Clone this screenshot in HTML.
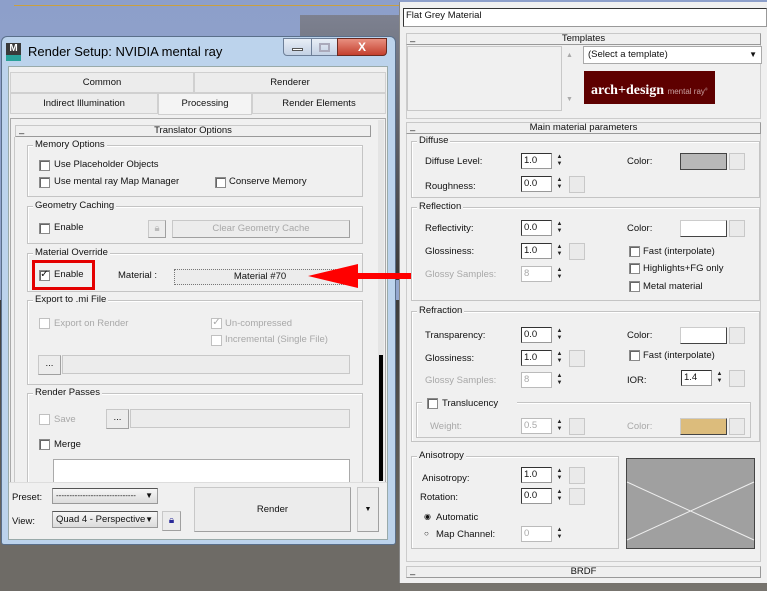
<!DOCTYPE html><html><head><style>
*{box-sizing:border-box;margin:0;padding:0}
body{width:767px;height:591px;overflow:hidden;position:relative;font-family:"Liberation Sans",sans-serif;font-size:9.5px;color:#111;background:#6c6a66}
.a{position:absolute}
.g{position:absolute;border:1px solid #c4c4c4;box-shadow:inset 1px 1px 0 #fff}
.gl{position:absolute;top:-7px;left:5px;background:#f0f0f0;padding:0 2px;font-size:9.5px}
.cb{position:absolute;width:11px;height:11px;background:#fff;border:1px solid #8a8a8a;box-shadow:inset 1px 1px 0 #666}
.btn{position:absolute;background:#ececec;border:1px solid #c8c8c8;border-right-color:#a0a0a0;border-bottom-color:#a0a0a0;text-align:center}
.in{position:absolute;background:#fff;border:1px solid #999;border-top-color:#333;border-left-color:#333;padding-left:2px;font-size:9.5px;line-height:13px}
.sp{position:absolute;width:9px;height:15px;font-size:6px;line-height:7px;text-align:center;color:#222}
.mb{position:absolute;width:16px;height:17px;background:#eaeaea;border:1px solid #c8c8c8}
.hd{position:absolute;height:12px;background:#efefef;border:1px solid #c8c8c8;border-right-color:#999;border-bottom-color:#999;text-align:center;line-height:10px}
.dis{color:#a8a8a8}
.tab{position:absolute;background:#ececec;border:1px solid #d0d0d0;text-align:center;line-height:19px}
</style></head><body>
<div class="a" style="left:0;top:0;width:767px;height:300px;background:linear-gradient(#8d9fca,#93a6cd)"></div>
<div class="a" style="left:300px;top:15px;width:100px;height:265px;background:linear-gradient(#7d8190,#3a3938)"></div>
<div class="a" style="left:0;top:300px;width:767px;height:291px;background:linear-gradient(#3e3d3b,#77746e)"></div>
<div class="a" style="left:0;top:540px;width:400px;height:51px;background:#6e6b66"></div>
<div class="a" style="left:14px;top:5px;width:390px;height:1px;background:#c9a040"></div>

<div class="a" style="left:1px;top:36px;width:395px;height:509px;background:#bcd3ec;border:1px solid #5a6f8a;border-radius:6px 6px 3px 3px"></div>
<div class="a" style="left:6px;top:43px;width:15px;height:18px;background:#3a3a3a;color:#fff;font-size:10px;font-weight:bold;line-height:12px;text-align:center">M<div style="background:#2aa19a;height:6px"></div></div>
<div class="a" style="left:28px;top:44px;font-size:13px;color:#000">Render Setup: NVIDIA mental ray</div>
<div class="a" style="left:283px;top:38px;width:29px;height:18px;border:1px solid #6d7f98;border-radius:0 0 0 4px;background:linear-gradient(#e8eef6,#c3d1e4)"><div style="margin:9px 8px 0;height:3px;background:#fff;border:1px solid #555"></div></div>
<div class="a" style="left:311px;top:38px;width:27px;height:18px;border:1px solid #6d7f98;background:linear-gradient(#e8eef6,#c3d1e4)"><div style="margin:4px 7px;height:9px;border:2px solid #aab"></div></div>
<div class="a" style="left:337px;top:38px;width:50px;height:18px;border:1px solid #6b2a20;border-radius:0 0 4px 0;background:linear-gradient(#e89080,#c4402e);color:#fff;font-weight:bold;font-size:12px;text-align:center;line-height:16px">X</div>
<div class="a" style="left:8px;top:66px;width:380px;height:474px;background:#f0f0f0;border:1px solid #9aa"></div>
<div class="tab" style="left:10px;top:72px;width:184px;height:21px">Common</div>
<div class="tab" style="left:194px;top:72px;width:192px;height:21px">Renderer</div>
<div class="tab" style="left:10px;top:93px;width:148px;height:21px">Indirect Illumination</div>
<div class="tab" style="left:158px;top:93px;width:94px;height:22px;background:#f4f4f4">Processing</div>
<div class="tab" style="left:252px;top:93px;width:134px;height:21px">Render Elements</div>
<div class="a" style="left:10px;top:118px;width:376px;height:368px;border:1px solid #aaa;background:#f0f0f0"></div>
<div class="a" style="left:378px;top:120px;width:6px;height:360px;background:#e4e4e4"></div>
<div class="a" style="left:379px;top:355px;width:4px;height:126px;background:#000"></div>
<div class="hd" style="left:15px;top:125px;width:356px">Translator Options</div>
<div class="a" style="left:19px;top:128px">–</div>
<div class="a" style="left:14px;top:137px;width:361px;height:348px;border-left:1px solid #c8c8c8"></div>

<div class="g" style="left:27px;top:145px;width:336px;height:52px"><span class="gl">Memory Options</span></div>
<div class="cb" style="left:39px;top:160px"></div><div class="a" style="left:54px;top:159px">Use Placeholder Objects</div>
<div class="cb" style="left:39px;top:177px"></div><div class="a" style="left:54px;top:176px">Use mental ray Map Manager</div>
<div class="cb" style="left:215px;top:177px"></div><div class="a" style="left:229px;top:176px">Conserve Memory</div>

<div class="g" style="left:27px;top:206px;width:336px;height:38px"><span class="gl">Geometry Caching</span></div>
<div class="cb" style="left:39px;top:223px"></div><div class="a" style="left:54px;top:222px">Enable</div>
<div class="btn" style="left:148px;top:220px;width:18px;height:18px;color:#bbb;line-height:16px">🔒︎</div>
<div class="btn dis" style="left:172px;top:220px;width:178px;height:18px;line-height:16px">Clear Geometry Cache</div>

<div class="g" style="left:27px;top:253px;width:336px;height:39px"><span class="gl">Material Override</span></div>
<div class="a" style="left:32px;top:260px;width:63px;height:30px;border:3px solid #e40000"></div>
<div class="cb" style="left:39px;top:270px;font-size:10px;line-height:8px;text-align:center">✓</div><div class="a" style="left:54px;top:269px">Enable</div>
<div class="a" style="left:118px;top:270px">Material :</div>
<div class="btn" style="left:174px;top:269px;width:172px;height:16px;line-height:14px;border:1px dotted #777">Material #70</div>

<div class="g" style="left:27px;top:300px;width:336px;height:85px"><span class="gl">Export to .mi File</span></div>
<div class="cb" style="left:39px;top:318px;border-color:#c0c0c0;box-shadow:none"></div><div class="a dis" style="left:54px;top:318px">Export on Render</div>
<div class="cb" style="left:211px;top:318px;border-color:#c0c0c0;box-shadow:none;color:#aaa;font-size:10px;line-height:8px;text-align:center">✓</div><div class="a dis" style="left:225px;top:318px">Un-compressed</div>
<div class="cb" style="left:211px;top:335px;border-color:#c0c0c0;box-shadow:none"></div><div class="a dis" style="left:225px;top:334px">Incremental (Single File)</div>
<div class="btn" style="left:38px;top:355px;width:23px;height:20px;line-height:15px">...</div>
<div class="a" style="left:62px;top:355px;width:288px;height:19px;border:1px solid #c8c8c8;background:#ececec"></div>

<div class="g" style="left:27px;top:393px;width:336px;height:94px;border-bottom:none"><span class="gl">Render Passes</span></div>
<div class="cb" style="left:39px;top:414px;border-color:#c0c0c0;box-shadow:none"></div><div class="a dis" style="left:54px;top:414px">Save</div>
<div class="btn" style="left:106px;top:409px;width:23px;height:20px;line-height:15px">...</div>
<div class="a" style="left:130px;top:409px;width:220px;height:19px;border:1px solid #c8c8c8;background:#ececec"></div>
<div class="cb" style="left:39px;top:439px"></div><div class="a" style="left:54px;top:439px">Merge</div>
<div class="a" style="left:53px;top:459px;width:297px;height:26px;background:#fff;border:1px solid #aaa"></div>
<div class="a" style="left:9px;top:482px;width:378px;height:57px;background:#f0f0f0;border-top:1px solid #ddd"></div>
<div class="a" style="left:12px;top:492px">Preset:</div>
<div class="a" style="left:52px;top:488px;width:106px;height:16px;border:1px solid #999;border-top-color:#555;background:linear-gradient(#f6f6f6,#dcdcdc);font-size:8px;line-height:13px;padding-left:3px">------------------------------ <span style="position:absolute;right:4px">▼</span></div>
<div class="a" style="left:12px;top:516px">View:</div>
<div class="a" style="left:52px;top:511px;width:106px;height:17px;border:1px solid #999;border-top-color:#555;background:linear-gradient(#f6f6f6,#dcdcdc);line-height:15px;padding-left:3px">Quad 4 - Perspective<span style="position:absolute;right:4px;font-size:8px">▼</span></div>
<div class="btn" style="left:162px;top:511px;width:19px;height:20px;color:#2a2a9a;line-height:18px;font-size:10px">🔒︎</div>
<div class="btn" style="left:194px;top:487px;width:157px;height:45px;line-height:43px">Render</div>
<div class="btn" style="left:357px;top:487px;width:22px;height:45px;line-height:43px;font-size:7px">▼</div>

<div class="a" style="left:399px;top:2px;width:368px;height:581px;background:#f0f0f0;border-left:1px solid #888"></div>
<div class="in" style="left:403px;top:8px;width:364px;height:19px;line-height:13px;padding-left:2px">Flat Grey Material</div>
<div class="hd" style="left:406px;top:33px;width:355px">Templates</div><div class="a" style="left:410px;top:36px">–</div>
<div class="a" style="left:406px;top:45px;width:355px;height:74px;border:1px solid #ccc;border-top:none"></div>
<div class="a" style="left:407px;top:46px;width:155px;height:65px;border:1px solid #c8c8c8"></div>
<div class="a" style="left:566px;top:52px;font-size:7px;color:#aaa">▲</div>
<div class="a" style="left:566px;top:96px;font-size:7px;color:#aaa">▼</div>
<div class="a" style="left:583px;top:46px;width:179px;height:18px;background:#fff;border:1px solid #aaa;line-height:15px;padding-left:4px;font-size:9.5px">(Select a template)<span style="position:absolute;right:4px;font-size:8px">▼</span></div>
<div class="a" style="left:584px;top:71px;width:131px;height:33px;background:#5e0000;color:#fff;padding:12px 0 0 7px;font-family:'Liberation Serif',serif;font-size:14px;font-weight:bold;white-space:nowrap">arch+design <span style="font-family:'Liberation Sans';font-size:8px;font-weight:normal;color:#c9a0a0">mental ray<sup style="font-size:4px">®</sup></span></div>

<div class="hd" style="left:406px;top:122px;width:355px">Main material parameters</div><div class="a" style="left:410px;top:125px">–</div>
<div class="a" style="left:406px;top:134px;width:355px;height:428px;border:1px solid #ccc;border-top:none"></div>

<div class="g" style="left:411px;top:141px;width:349px;height:57px"><span class="gl">Diffuse</span></div>
<div class="a" style="left:425px;top:156px">Diffuse Level:</div>
<div class="in" style="left:521px;top:153px;width:31px;height:16px">1.0</div><div class="sp" style="left:555px;top:154px">▲<br>▼</div>
<div class="a" style="left:627px;top:156px">Color:</div>
<div class="a" style="left:680px;top:153px;width:47px;height:17px;background:#b8b8b8;border:1px solid #444"></div><div class="mb" style="left:729px;top:153px"></div>
<div class="a" style="left:425px;top:181px">Roughness:</div>
<div class="in" style="left:521px;top:176px;width:31px;height:16px">0.0</div><div class="sp" style="left:555px;top:177px">▲<br>▼</div><div class="mb" style="left:569px;top:176px"></div>

<div class="g" style="left:411px;top:207px;width:349px;height:94px"><span class="gl">Reflection</span></div>
<div class="a" style="left:425px;top:223px">Reflectivity:</div>
<div class="in" style="left:521px;top:220px;width:31px;height:16px">0.0</div><div class="sp" style="left:555px;top:221px">▲<br>▼</div>
<div class="a" style="left:627px;top:223px">Color:</div>
<div class="a" style="left:680px;top:220px;width:47px;height:17px;background:#fff;border:1px solid #ccc;border-right-color:#444;border-bottom-color:#444"></div><div class="mb" style="left:729px;top:220px"></div>
<div class="a" style="left:425px;top:246px">Glossiness:</div>
<div class="in" style="left:521px;top:243px;width:31px;height:16px">1.0</div><div class="sp" style="left:555px;top:244px">▲<br>▼</div><div class="mb" style="left:569px;top:243px"></div>
<div class="cb" style="left:629px;top:246px"></div><div class="a" style="left:643px;top:246px">Fast (interpolate)</div>
<div class="a dis" style="left:425px;top:269px">Glossy Samples:</div>
<div class="in dis" style="left:521px;top:266px;width:31px;height:16px;border-color:#bbb">8</div><div class="sp" style="left:555px;top:267px">▲<br>▼</div>
<div class="cb" style="left:629px;top:263px"></div><div class="a" style="left:643px;top:263px">Highlights+FG only</div>
<div class="cb" style="left:629px;top:281px"></div><div class="a" style="left:643px;top:281px">Metal material</div>

<div class="g" style="left:411px;top:311px;width:349px;height:131px"><span class="gl">Refraction</span></div>
<div class="a" style="left:425px;top:330px">Transparency:</div>
<div class="in" style="left:521px;top:327px;width:31px;height:16px">0.0</div><div class="sp" style="left:555px;top:328px">▲<br>▼</div>
<div class="a" style="left:627px;top:330px">Color:</div>
<div class="a" style="left:680px;top:327px;width:47px;height:17px;background:#fff;border:1px solid #ccc;border-right-color:#444;border-bottom-color:#444"></div><div class="mb" style="left:729px;top:327px"></div>
<div class="a" style="left:425px;top:353px">Glossiness:</div>
<div class="in" style="left:521px;top:350px;width:31px;height:16px">1.0</div><div class="sp" style="left:555px;top:351px">▲<br>▼</div><div class="mb" style="left:569px;top:350px"></div>
<div class="cb" style="left:629px;top:350px"></div><div class="a" style="left:643px;top:350px">Fast (interpolate)</div>
<div class="a dis" style="left:425px;top:375px">Glossy Samples:</div>
<div class="in dis" style="left:521px;top:372px;width:31px;height:16px;border-color:#bbb">8</div><div class="sp" style="left:555px;top:373px">▲<br>▼</div>
<div class="a" style="left:627px;top:375px">IOR:</div>
<div class="in" style="left:681px;top:370px;width:31px;height:16px">1.4</div><div class="sp" style="left:715px;top:371px">▲<br>▼</div><div class="mb" style="left:729px;top:370px"></div>
<div class="g" style="left:416px;top:402px;width:335px;height:36px"></div>
<div class="a" style="left:422px;top:396px;width:95px;height:12px;background:#f0f0f0"></div>
<div class="cb" style="left:427px;top:398px"></div><div class="a" style="left:442px;top:398px">Translucency</div>
<div class="a dis" style="left:430px;top:421px">Weight:</div>
<div class="in dis" style="left:521px;top:418px;width:31px;height:16px;border-color:#bbb">0.5</div><div class="sp" style="left:555px;top:419px">▲<br>▼</div><div class="mb" style="left:569px;top:418px"></div>
<div class="a dis" style="left:627px;top:421px">Color:</div>
<div class="a" style="left:680px;top:418px;width:47px;height:17px;background:#dcbc7c;border:1px solid #ccc;border-right-color:#444;border-bottom-color:#444"></div><div class="mb" style="left:729px;top:418px"></div>

<div class="g" style="left:411px;top:456px;width:208px;height:93px"><span class="gl">Anisotropy</span></div>
<div class="a" style="left:422px;top:473px">Anisotropy:</div>
<div class="in" style="left:521px;top:467px;width:31px;height:16px">1.0</div><div class="sp" style="left:555px;top:468px">▲<br>▼</div><div class="mb" style="left:569px;top:467px"></div>
<div class="a" style="left:420px;top:492px">Rotation:</div>
<div class="in" style="left:521px;top:488px;width:31px;height:16px">0.0</div><div class="sp" style="left:555px;top:489px">▲<br>▼</div><div class="mb" style="left:569px;top:488px"></div>
<div class="a" style="left:424px;top:512px;font-size:8px">◉</div><div class="a" style="left:436px;top:512px">Automatic</div>
<div class="a" style="left:424px;top:529px;font-size:8px">○</div><div class="a" style="left:436px;top:529px">Map Channel:</div>
<div class="in dis" style="left:521px;top:526px;width:31px;height:16px;border-color:#bbb">0</div><div class="sp" style="left:555px;top:527px">▲<br>▼</div>
<svg class="a" style="left:626px;top:458px" width="129" height="91"><rect x="0" y="0" width="129" height="91" fill="#a0a0a0" stroke="#444" stroke-width="2"/><line x1="1" y1="24" x2="128" y2="82" stroke="#eee"/><line x1="1" y1="82" x2="128" y2="24" stroke="#eee"/></svg>

<div class="hd" style="left:406px;top:566px;width:355px">BRDF</div><div class="a" style="left:410px;top:569px">–</div>

<svg class="a" style="left:300px;top:258px" width="115" height="36"><polygon points="8,18 58,6 58,15 111,15 111,21 58,21 58,30" fill="#f00"/></svg>
</body></html>
